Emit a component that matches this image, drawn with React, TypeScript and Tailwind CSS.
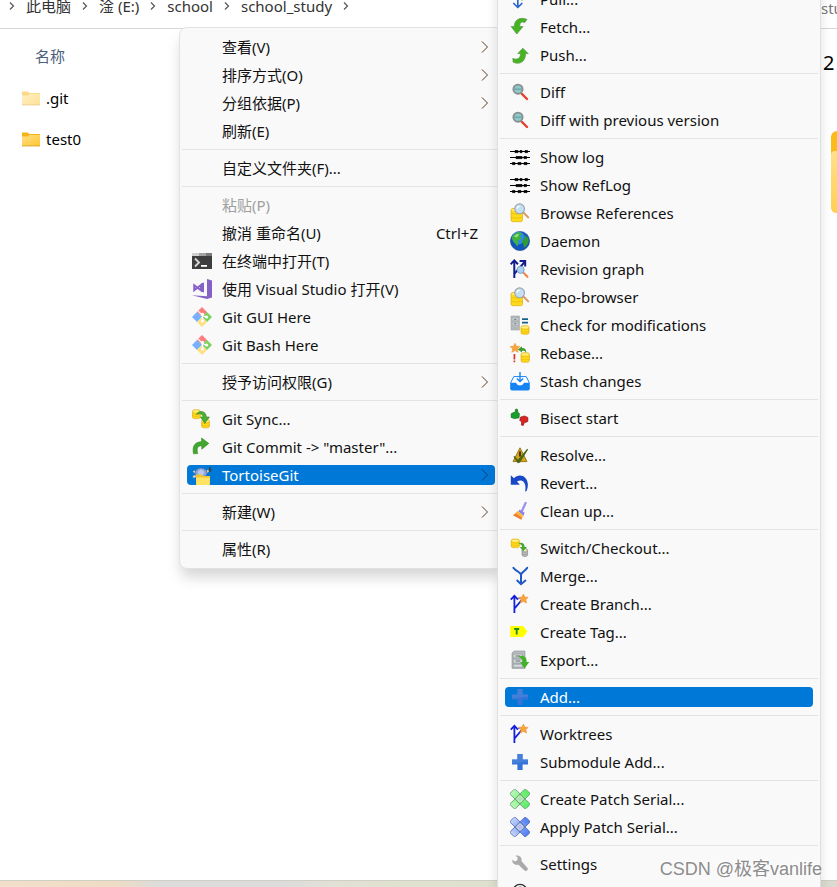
import React, { useId } from "react";

type IconName =
  | "terminal" | "vs" | "git" | "sync" | "commit" | "tortoise"
  | "pull" | "fetch" | "push" | "diff" | "log" | "browse" | "globe" | "graph"
  | "check" | "rebase" | "stash" | "bisect" | "resolve" | "revert" | "clean"
  | "switch" | "merge" | "branch" | "tag" | "export" | "add" | "patchGreen"
  | "patchBlue" | "settings" | "help";

type Entry =
  | { kind: "separator" }
  | {
      kind: "item";
      label: string;
      icon?: IconName;
      shortcut?: string;
      submenu?: boolean;
      active?: boolean;
      disabled?: boolean;
    };

const sep: Entry = { kind: "separator" };
const item = (
  label: string,
  icon?: IconName,
  extra: { shortcut?: string; submenu?: boolean; active?: boolean; disabled?: boolean } = {},
): Entry => ({ kind: "item", label, icon, ...extra });

const shellMenu: Entry[] = [
  item("查看(V)", undefined, { submenu: true }),
  item("排序方式(O)", undefined, { submenu: true }),
  item("分组依据(P)", undefined, { submenu: true }),
  item("刷新(E)"),
  sep,
  item("自定义文件夹(F)..."),
  sep,
  item("粘贴(P)", undefined, { disabled: true }),
  item("撤消 重命名(U)", undefined, { shortcut: "Ctrl+Z" }),
  item("在终端中打开(T)", "terminal"),
  item("使用 Visual Studio 打开(V)", "vs"),
  item("Git GUI Here", "git"),
  item("Git Bash Here", "git"),
  sep,
  item("授予访问权限(G)", undefined, { submenu: true }),
  sep,
  item("Git Sync...", "sync"),
  item('Git Commit -> "master"...', "commit"),
  item("TortoiseGit", "tortoise", { submenu: true, active: true }),
  sep,
  item("新建(W)", undefined, { submenu: true }),
  sep,
  item("属性(R)"),
];

const tortoiseMenu: Entry[] = [
  item("Pull...", "pull"),
  item("Fetch...", "fetch"),
  item("Push...", "push"),
  sep,
  item("Diff", "diff"),
  item("Diff with previous version", "diff"),
  sep,
  item("Show log", "log"),
  item("Show RefLog", "log"),
  item("Browse References", "browse"),
  item("Daemon", "globe"),
  item("Revision graph", "graph"),
  item("Repo-browser", "browse"),
  item("Check for modifications", "check"),
  item("Rebase...", "rebase"),
  item("Stash changes", "stash"),
  sep,
  item("Bisect start", "bisect"),
  sep,
  item("Resolve...", "resolve"),
  item("Revert...", "revert"),
  item("Clean up...", "clean"),
  sep,
  item("Switch/Checkout...", "switch"),
  item("Merge...", "merge"),
  item("Create Branch...", "branch"),
  item("Create Tag...", "tag"),
  item("Export...", "export"),
  sep,
  item("Add...", "add", { active: true }),
  sep,
  item("Worktrees", "branch"),
  item("Submodule Add...", "add"),
  sep,
  item("Create Patch Serial...", "patchGreen"),
  item("Apply Patch Serial...", "patchBlue"),
  sep,
  item("Settings", "settings"),
  item("Help", "help"),
];

function Cylinder({ x, y, w, h, color = "#ffd91a", edge = "#d9a400" }: { x: number; y: number; w: number; h: number; color?: string; edge?: string }) {
  return (
    <g>
      <rect x={x} y={y} width={w} height={h} rx="1.8" fill={color} stroke={edge} strokeWidth="0.6" />
      <path d={`M${x} ${y + h * 0.36}q${w / 2} 2 ${w} 0M${x} ${y + h * 0.66}q${w / 2} 2 ${w} 0`} fill="none" stroke={edge} strokeWidth="0.6" opacity="0.7" />
      <ellipse cx={x + w / 2} cy={y + 1.6} rx={w / 2 - 0.6} ry="1.1" fill="#fff2a0" opacity="0.8" />
    </g>
  );
}

function Star({ x, y }: { x: number; y: number }) {
  return (
    <path
      transform={`translate(${x} ${y})`}
      d="M0-4.8 1.5-1.7 4.8-1.4 2.4.9 3.2 4.3 0 2.6-3.2 4.3-2.4.9-4.8-1.4-1.5-1.7Z"
      fill="#fba43e"
      stroke="#e88a2c"
      strokeWidth="0.5"
    />
  );
}

function Patch({ from, to, edge }: { from: string; to: string; edge: string }) {
  const id = useId();
  return (
    <g stroke={edge} strokeWidth="0.8">
      <defs>
        <linearGradient id={id} x1="0" y1="0" x2="1" y2="0">
          <stop offset="0" stopColor={from} />
          <stop offset="1" stopColor={to} />
        </linearGradient>
      </defs>
      <rect x="-1" y="6.4" width="22" height="7.2" rx="1" transform="rotate(-45 10 10)" fill={`url(#${id})`} />
      <rect x="-1" y="6.4" width="22" height="7.2" rx="1" transform="rotate(45 10 10)" fill={`url(#${id})`} />
      <rect x="6.4" y="6.4" width="7.2" height="7.2" transform="rotate(45 10 10)" fill={from} />
      <g fill="#fff" strokeWidth="0.4">
        <circle cx="10" cy="7.2" r="1" />
        <circle cx="7.2" cy="10" r="1" />
        <circle cx="12.8" cy="10" r="1" />
        <circle cx="10" cy="12.8" r="1" />
        <circle cx="10" cy="10" r="1" />
      </g>
    </g>
  );
}

function Lens({ x, y, r }: { x: number; y: number; r: number }) {
  return (
    <g>
      <circle cx={x} cy={y} r={r} fill="#c4dff2" stroke="#9aa5b0" strokeWidth="1.1" />
      <path d={`M${x - r / 2} ${y}a${r / 2} ${r / 2} 0 0 1 ${r / 2} ${-r / 2}`} stroke="#fff" strokeWidth="1.1" fill="none" />
    </g>
  );
}

function glyph(name: IconName): React.ReactNode {
  switch (name) {
    case "terminal":
      return (
        <g>
          <path d="M0 2h20v16H0z" fill="#3d3d3d" />
          <path d="M0 2h7v3H0z" fill="#cfcfcf" />
          <path d="M7 2h7v3H7z" fill="#a2a2a2" />
          <path d="M14 2h6v3h-6z" fill="#7a7a7a" />
          <path d="m3 7.5 4 4-4 4" fill="none" stroke="#d6d6d6" strokeWidth="1.9" />
          <path d="M9 14h6v1.8H9z" fill="#fff" />
        </g>
      );
    case "vs":
      return (
        <g>
          <path d="M15 0l5 1.6v16.8L15 20 0 16.2l15 1z" fill="#8661c5" />
          <path d="M2.2 6.2 9 11.3V5.9L2.2 11.2z" fill="none" stroke="#8661c5" strokeWidth="1.9" />
          <path d="M9 4.6 12 3.5v10L9 12.4z" fill="#8661c5" />
        </g>
      );
    case "git":
      return (
        <g>
          <path d="M10 0 15.2 5.2 10 10 4.8 5.2z" fill="#ff7c7c" />
          <path d="M5 5 9.8 10 5 15 0 10z" fill="#78b0fb" />
          <path d="M15 5l5 5-5 5-5-5z" fill="#7cd160" />
          <path d="M10 10.4 15 15l-5 5-5-5z" fill="#ffe080" />
          <path d="M6.2 4.2 10.5 8.5v6M10.5 8.5l4 2" stroke="#fff" strokeWidth="1.2" fill="none" />
          <circle cx="10.5" cy="7.4" r="1.6" fill="#fff" />
          <circle cx="14.6" cy="10" r="1.6" fill="#fff" />
          <circle cx="10.4" cy="14" r="1.5" fill="#fff" />
        </g>
      );
    case "sync":
      return (
        <g>
          <Cylinder x={0.5} y={0.8} w={7.8} h={8.8} />
          <Cylinder x={9.6} y={10.6} w={7.8} h={8.2} />
          <path d="M4.4 5.6C6 1 14 1.4 14.4 8h3l-4.6 6.4L8.4 8H11c-.2-3-3.6-4-6.6-2.4z" fill="#4caf32" stroke="#3a8226" strokeWidth="0.6" />
        </g>
      );
    case "commit":
      return <path d="M1.5 16.8C-.2 8 4 4.8 9.6 4.8V1L16.8 6.4l-7 5.8V8.8C6 8.8 4 10.8 5.8 16.6z" fill="#41a82d" stroke="#2f8423" strokeWidth="0.6" />;
    case "tortoise":
      return (
        <g>
          <path d="M1.5 6l3 2.5M1 12l4-1.5M13.5 8.4 17 5" stroke="#e5d5b3" strokeWidth="2" />
          <ellipse cx="9" cy="8" rx="6" ry="5" fill="#8ea5d8" stroke="#4967a8" strokeWidth="0.8" />
          <path d="M5.6 7 9 4.2 12.4 7 11 10H7z" fill="#b6c8ee" />
          <path d="M18 2v5M16.5 5h3" stroke="#2d4a57" strokeWidth="1.8" />
          <path d="M4 9.6h6l1.2 1.5H18V20H4z" fill="#efc42f" />
          <path d="M4 12.4h14l-.6 7.6H4.5z" fill="#ffe364" />
        </g>
      );
    case "pull":
      return (
        <g fill="none" strokeLinecap="round" strokeLinejoin="round">
          <path d="M7.8 2v16M3.8 14.5l4 4 4-4" stroke="#2b66cf" strokeWidth="1.7" />
          <path d="M12 2v9" stroke="#59d42d" strokeWidth="1.6" />
        </g>
      );
    case "fetch":
      return <path d="M17 2.4 14.6 5.6C11 3.8 9.6 6.2 9.8 9.6h3.2L6.8 17 1.2 9.6h3C4.4 2.6 10.2-.4 17 2.4z" fill="#45b51f" stroke="#5f9a55" strokeWidth="0.8" />;
    case "push":
      return <path d="M2.8 13.4c4 1.6 7.6.6 7.8-4.8H7.8l5-5.4 5.4 5.4h-2.6c-.2 9-6.6 11.2-12.4 8.6z" fill="#45b51f" stroke="#5f9a55" strokeWidth="0.8" />;
    case "diff":
      return (
        <g>
          <path d="m11.5 11.5 5.5 5.5" stroke="#e5402b" strokeWidth="2.4" strokeLinecap="round" />
          <circle cx="8" cy="7.2" r="4.6" fill="#8dcaca" stroke="#8a8e8e" strokeWidth="1.9" />
          <path d="M4.6 7.2h6.8" stroke="#6b9ea1" strokeWidth="1.2" />
        </g>
      );
    case "log":
      return (
        <g fill="#000" stroke="#000">
          <path d="M0 4.5h20M0 10.5h20M0 16.5h20" strokeWidth="1" />
          <path d="M5 3.6h3v2H5zM10 3.6h2v2h-2zM15 3.6h2.5v2H15zM6 9.6h6v2H6zM14 9.6h2.5v2H14zM2.5 15.6H5v2H2.5zM8 15.6h3v2H8zM14 15.6h3v2h-3z" strokeWidth="0.8" />
        </g>
      );
    case "browse":
      return (
        <g>
          <Cylinder x={1} y={5.5} w={11.5} h={13.2} />
          <path d="m13.2 9.2 5 5.2" stroke="#d99a63" strokeWidth="2" strokeLinecap="round" />
          <Lens x={9.6} y={5.8} r={4.9} />
        </g>
      );
    case "globe":
      return (
        <g>
          <circle cx="10" cy="10" r="9.6" fill="#0f55bd" stroke="#16478c" strokeWidth="0.6" />
          <circle cx="8.4" cy="7" r="6.4" fill="#3c9bf0" opacity="0.75" />
          <path d="M2 6.6C3.6 3 7 1 10 1.4L11.6 3 10 5.6l1.4 1.6-2.2 2L7.4 9l1.4 3-1.6 3.6-2.4-3.8L2.8 9.6z" fill="#3fb33c" />
          <path d="M12.4 9.4 15 6.4l-.6-2.6 3.6 3 .8 3.6-2 4.4-3 2-.4-3.8-1.8-1.4z" fill="#2f9a3a" />
          <path d="M3.8 5.6l3-2.6 2.4.4-2.4 3z" fill="#9be07b" />
        </g>
      );
    case "graph":
      return (
        <g>
          <path d="M4.3 19V1.5M.6 5.2 4.3 1.5 8 5.2" fill="none" stroke="#131c8e" strokeWidth="2" />
          <path d="M4.5 14.6 14.6 3M9.6 2h5.6v5.6" fill="none" stroke="#131c8e" strokeWidth="2" />
          <path d="m13.4 13.6 4 4.2" stroke="#ee8647" strokeWidth="2.1" strokeLinecap="round" />
          <circle cx="10.6" cy="10.8" r="3.6" fill="#a8d0f0" stroke="#7b98ba" strokeWidth="0.9" />
        </g>
      );
    case "check":
      return (
        <g>
          <path d="M1 1h8.5v14H1z" fill="#b3b8bc" stroke="#a1a6aa" strokeWidth="0.6" />
          <path d="M2.2 2.6h6v3.2h-6zM2.2 7.2h6v3.2h-6z" fill="#cdd2d5" stroke="#9ca1a5" strokeWidth="0.5" />
          <path d="M4 4.3h2.4M4 8.8h2.4" stroke="#70777b" />
          <path d="M12 4.2h6M12 7.6h6" stroke="#17618a" strokeWidth="1.7" />
          <Cylinder x={11} y={10.8} w={8} h={8.4} />
        </g>
      );
    case "rebase":
      return (
        <g>
          <Cylinder x={11} y={9.8} w={8.4} h={9.4} />
          <Star x={5} y={5} />
          <path d="M4.4 11v5.4M4.4 17.6v1.6" stroke="#d9362c" strokeWidth="1.7" />
          <path d="M7.8 6.4 12 3.2V5c3 0 4.6 2 4.2 4.8-1-1.8-2.4-2.2-4.2-2v1.8z" fill="#3f9c33" />
        </g>
      );
    case "stash":
      return (
        <g>
          <path d="M.8 11.5 3.8 5.6h12.4l3 5.9V18a1 1 0 0 1-1 1H1.8a1 1 0 0 1-1-1z" fill="#fff" stroke="#1683f5" strokeWidth="1" />
          <path d="M.6 11.8h5.6c.8 3.6 6.8 3.6 7.6 0h5.6V18a1 1 0 0 1-1 1H1.6a1 1 0 0 1-1-1z" fill="#1683f5" />
          <path d="M10 1v9.4M6.8 7.4l3.2 3.2 3.2-3.2" fill="none" stroke="#1683f5" strokeWidth="1.4" />
        </g>
      );
    case "bisect":
      return (
        <g>
          <path d="M1.2 5.8 3 4.8l2.2-.6L5.4 1.4 7.2 1 8 4.6l1.4 1-.4 4.2-4.6.8-3.2-1.2z" fill="#15a02b" stroke="#176720" strokeWidth="0.7" />
          <path d="M10.4 9.2 14.4 8l3.4 1.4v4.2l-3.6 1.2-1 2.8-1.8-.6.2-3.4-1.8-1z" fill="#db2323" stroke="#8b1414" strokeWidth="0.7" />
        </g>
      );
    case "resolve":
      return (
        <g>
          <path d="M10 2.8 17 16.6H3z" fill="#d6a514" stroke="#a0781c" strokeWidth="1" />
          <path d="M10 6.4v5M10 13v1.8" stroke="#332b12" strokeWidth="1.8" />
          <path d="m4 11.4 4 4.2 9.6-11.4L9.6 17 8 17.6z" fill="#4d6618" stroke="#4d6618" strokeWidth="1.2" />
        </g>
      );
    case "revert":
      return <path d="M.8 11.8V2.2L4 5.2c5.6-6.6 17.8-1 12.6 12.8l-1.6.6C17 10 12.6 5.4 7 8.4l2.8 3.4z" fill="#1948c6" />;
    case "clean":
      return (
        <g>
          <path d="m15.6 2-4.2 9.2" stroke="#9d91ef" strokeWidth="2.3" strokeLinecap="round" />
          <path d="m9.6 8.4 5 3.4-1 3-5.4-4.2z" fill="#8e84e2" />
          <path d="m7.6 10 5.6 4.4-1.6 4.2L3 14.2z" fill="#ffb53b" />
          <path d="m3 14.2 3-1.6 5.8 4.2-.4 2z" fill="#ee7b3a" />
        </g>
      );
    case "switch":
      return (
        <g>
          <Cylinder x={1.2} y={1.2} w={8.2} h={8.4} />
          <Cylinder x={12} y={10.6} w={5.6} h={7.8} color="#b7bbb9" edge="#7d817f" />
          <path d="M8.2 5.6c4-2 6.6.4 6.4 3.4H17l-3.8 4.2L9.8 9h2.4c-.2-1.8-1.8-2.8-4-3.4z" fill="#49a82f" />
        </g>
      );
    case "merge":
      return (
        <path d="M3.4 1.8C7 6 10 5.6 11 8.8v9M17.2 1.8C14 6 12 5.6 11 8.8M7.2 14.6 11 18.2l4.4-3.6" fill="none" stroke="#1e5ac5" strokeWidth="2" strokeLinecap="round" />
      );
    case "branch":
      return (
        <g>
          <path d="M4.4 19V2M.8 5.6 4.4 1.8 8 5.6M4.6 14.4 12.6 5" fill="none" stroke="#1521d9" strokeWidth="1.8" />
          <path d="M7.6 4.4h5" fill="none" stroke="#5c81d8" strokeWidth="1.3" />
          <Star x={13.4} y={4.8} />
        </g>
      );
    case "tag":
      return (
        <g>
          <path d="M.2 4h13L17.4 9.5 13.2 15h-13z" fill="#ffff00" />
          <path d="M4.2 7h5M6.7 7v5.4" fill="none" stroke="#228a22" strokeWidth="1.9" />
        </g>
      );
    case "export":
      return (
        <g>
          <path d="M2 3 4 1h11v17.4H2z" fill="#b7bcbf" stroke="#8c9194" strokeWidth="0.6" />
          <path d="M3.2 4h9.4v3.8H3.2zM3.2 9.2h9.4V13H3.2zM3.2 14.2h9.4v3H3.2z" fill="#d6dadd" stroke="#8c9194" strokeWidth="0.6" />
          <path d="M5.6 6h4.6M5.6 11h4.6" stroke="#6b7073" strokeWidth="1.2" />
          <path d="M8 6.6c5-2 9 0 8.6 5.4h2.6l-4.6 6.4-4.4-6.4h2.4c0-2.6-1.4-4.4-4.6-5.4z" fill="#43b22a" />
        </g>
      );
    case "add":
      return (
        <g>
          <path d="M7.4 2h5.2v5.4H18v5.2h-5.4V18H7.4v-5.4H2V7.4h5.4z" fill="#3474d8" />
          <path d="M7.4 2h5.2v5.4H18v2C12 9.4 8 12 2 11V7.4h5.4z" fill="#4c84dc" opacity="0.7" />
        </g>
      );
    case "patchGreen":
      return <Patch from="#b6f8b6" to="#5cec66" edge="#5c9c64" />;
    case "patchBlue":
      return <Patch from="#c3d2fd" to="#4f7df2" edge="#5069a6" />;
    case "settings":
      return <path d="M2.2 5.8 5 7.6l2.4-1.4.2-3L5.4 1.8c3.8-1 6.8 1.6 6.2 5.4l6 6.8c.8 2-.8 3.4-2.8 2.8L8.4 10.8c-3.6.8-6.4-1.4-6.2-5z" fill="#aaa" />;
    case "help":
      return (
        <g fill="none" stroke="#2c3336" strokeWidth="1.4">
          <circle cx="10" cy="9.4" r="7" fill="#fff" />
          <path d="M7.6 7.6c0-3.2 5-3 5 0 0 2-2.4 1.8-2.4 4" />
        </g>
      );
  }
}

function Chevron({ active }: { active?: boolean }) {
  return (
    <svg className="h-3 w-[11px]" viewBox="0 0 11 12" fill="none" aria-hidden="true">
      {active ? (
        <path d="m3 .5 5.5 5.5L3 11.5" stroke="#083c70" />
      ) : (
        <>
          <path d="m2.7.5 5.5 5.5-5.5 5.5" stroke="#c08a34" />
          <path d="M3.3.5 8.8 6l-5.5 5.5" stroke="#5a68a8" strokeWidth="0.7" />
        </>
      )}
    </svg>
  );
}

function Menu({ entries, label }: { entries: Entry[]; label: string }) {
  return (
    <div role="menu" aria-label={label} className="flex flex-col gap-2 px-0.5 py-[9px]">
      {entries.map((entry, i) =>
        entry.kind === "separator" ? (
          <hr key={i} className="h-px shrink-0 border-0 bg-[#e3e3e3]" />
        ) : (
          <button
            key={i}
            role="menuitem"
            disabled={entry.disabled}
            className={`mx-[5px] flex h-5 shrink-0 items-center rounded px-[5px] text-left text-[15px] leading-5 whitespace-nowrap ${
              entry.active ? "bg-[#0078d7] text-white" : entry.disabled ? "text-[#a0a0a0]" : "text-[#111]"
            }`}
          >
            <svg className="mr-2.5 size-5 shrink-0" viewBox="0 0 20 20" fill="none" aria-hidden="true">
              {entry.icon && glyph(entry.icon)}
            </svg>
            <span className="flex-1">{entry.label}</span>
            {entry.shortcut && <span className="mr-3">{entry.shortcut}</span>}
            {entry.submenu && <Chevron active={entry.active} />}
          </button>
        ),
      )}
    </div>
  );
}

function Folder({ faded }: { faded?: boolean }) {
  return (
    <svg className={`h-[15px] w-[18px] ${faded ? "opacity-50" : ""}`} viewBox="0 0 18 15" aria-hidden="true">
      <defs>
        <linearGradient id="folderFront" x1="0" y1="0" x2="1" y2="1">
          <stop offset="0" stopColor="#ffe08a" />
          <stop offset="1" stopColor="#ffc52e" />
        </linearGradient>
      </defs>
      <path d="M0 .5h5.6L7.4 2H18v5H0z" fill="#f7b416" />
      <path d="M0 4.4h6L7.6 3H18v11H0z" fill="url(#folderFront)" />
      <path d="M0 13.4h18v1H0z" fill="#dda72c" />
    </svg>
  );
}

function Crumb({ children }: { children?: React.ReactNode }) {
  return (
    <>
      <svg className="h-2 w-1.5 shrink-0" viewBox="0 0 6 8" fill="none" aria-hidden="true">
        <path d="m1 .5 3.5 3.5L1 7.5" stroke="#555" strokeWidth="1.2" />
      </svg>
      {children}
    </>
  );
}

export default function App() {
  return (
    <div className="relative flex h-screen flex-col overflow-hidden bg-white font-['Noto_Sans','Noto_Sans_CJK_SC',sans-serif] text-[15px] text-[#1a1a1a]">
      <header className="flex h-[29px] shrink-0 items-start justify-between border-b border-[#d6d6d6] text-[#333]">
        <nav aria-label="路径" className="flex h-3 items-center gap-[11px] pl-[9px] leading-3">
          <Crumb><a href="#pc">此电脑</a></Crumb>
          <Crumb><a href="#e">淦 (E:)</a></Crumb>
          <Crumb><a href="#school">school</a></Crumb>
          <Crumb><a href="#study">school_study</a></Crumb>
          <Crumb />
        </nav>
        <span className="w-4 overflow-hidden leading-4 text-[#777]">stu</span>
      </header>

      <main className="flex flex-1 justify-between">
        <section className="flex flex-col pt-[17px] pl-[22px]">
          <h2 className="pl-[13px] leading-5 text-[#4c607a]">名称</h2>
          <ul className="mt-[22px] flex flex-col gap-[21px]">
            <li className="flex h-5 items-center gap-1.5 leading-5 text-black"><Folder faded />.git</li>
            <li className="flex h-5 items-center gap-1.5 leading-5 text-black"><Folder />test0</li>
          </ul>
        </section>
        <aside className="flex w-3.5 flex-col pt-5">
          <span className="text-[20px] leading-7 text-black">2</span>
          <div className="mt-[54px] ml-2 h-[82px] overflow-hidden rounded-l-md bg-[#fcbb18] pt-5">
            <div className="h-full rounded-tl bg-gradient-to-b from-[#ffe08a] to-[#ffcf4d]" />
          </div>
        </aside>
      </main>

      <footer className="h-[7px] shrink-0 border-t border-[#cfcfc4] bg-[linear-gradient(to_right,#f1dfcc_0%,#eedcc4_14%,#dcdcdb_19%,#dcdcdc_34%,#e3e0d6_40%,#dfe2ce_50%,#dadcd2_100%)]" />

      <div className="absolute top-[27px] left-[179px] w-[324px] rounded-lg border border-[#e2e2e2] bg-[#f9f9f9] shadow-[0_10px_14px_-2px_rgba(0,0,0,0.17)]">
        <Menu entries={shellMenu} label="文件夹" />
      </div>

      <div className="absolute -top-[21px] left-[497px] w-[324px] rounded-lg border border-[#dfdfdf] bg-[#f9f9f9] shadow-[0_4px_12px_rgba(0,0,0,0.12)]">
        <Menu entries={tortoiseMenu} label="TortoiseGit" />
      </div>

      <p className="absolute right-[15px] bottom-[6px] font-['Liberation_Sans','Noto_Sans_CJK_SC',sans-serif] text-[18px] leading-6 whitespace-nowrap text-[#8c8c8c] [text-shadow:-1px_-1px_0_#fff]">
        CSDN @极客vanlife
      </p>
    </div>
  );
}
